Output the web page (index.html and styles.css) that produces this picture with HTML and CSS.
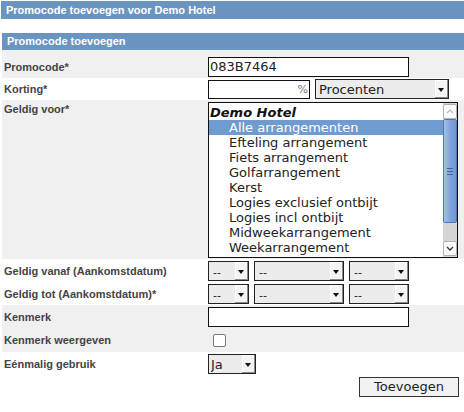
FILE: index.html
```html
<!DOCTYPE html>
<html lang="nl">
<head>
<meta charset="utf-8">
<title>Promocode toevoegen</title>
<link rel="stylesheet" href="styles.css">
</head>
<body>
<div class="page-title">Promocode toevoegen voor Demo Hotel</div>
<form class="form">
  <div class="form-head">Promocode toevoegen</div>

  <div class="row row-first shade">
    <label class="label">Promocode*</label>
    <div class="value"><input class="text text-long" type="text" value="083B7464"></div>
  </div>

  <div class="row row-korting">
    <label class="label">Korting*</label>
    <div class="value">
      <span class="pct-box"><input class="pct-input" type="text" value=""><span class="pct">%</span></span>
      <span class="sel sel-type"><select><option>Procenten</option></select></span>
    </div>
  </div>

  <div class="row row-list shade">
    <label class="label label-top">Geldig voor*</label>
    <div class="value">
      <div class="listbox" role="listbox">
        <div class="lb-items">
          <div class="lb-group">Demo Hotel</div>
          <div class="lb-opt selected">Alle arrangementen</div>
          <div class="lb-opt">Efteling arrangement</div>
          <div class="lb-opt">Fiets arrangement</div>
          <div class="lb-opt">Golfarrangement</div>
          <div class="lb-opt">Kerst</div>
          <div class="lb-opt">Logies exclusief ontbijt</div>
          <div class="lb-opt">Logies incl ontbijt</div>
          <div class="lb-opt">Midweekarrangement</div>
          <div class="lb-opt">Weekarrangement</div>
        </div>
        <div class="scrollbar">
          <div class="sb-btn sb-up"><svg width="8" height="5" viewBox="0 0 8 5"><path d="M1 4 L4 1 L7 4" fill="none" stroke="#b8b8b8" stroke-width="1.2"/></svg></div>
          <div class="sb-thumb"><span class="grip"></span></div>
          <div class="sb-track"></div>
          <div class="sb-btn sb-down"><svg width="8" height="5" viewBox="0 0 8 5"><path d="M1 1 L4 4 L7 1" fill="none" stroke="#333" stroke-width="1.3"/></svg></div>
        </div>
      </div>
    </div>
  </div>

  <div class="row">
    <label class="label">Geldig vanaf (Aankomstdatum)</label>
    <div class="value dates">
      <span class="sel sel-day"><select><option>--</option></select></span>
      <span class="sel sel-month"><select><option>--</option></select></span>
      <span class="sel sel-year"><select><option>--</option></select></span>
    </div>
  </div>

  <div class="row">
    <label class="label">Geldig tot (Aankomstdatum)*</label>
    <div class="value dates">
      <span class="sel sel-day"><select><option>--</option></select></span>
      <span class="sel sel-month"><select><option>--</option></select></span>
      <span class="sel sel-year"><select><option>--</option></select></span>
    </div>
  </div>

  <div class="row shade">
    <label class="label">Kenmerk</label>
    <div class="value"><input class="text text-long" type="text" value=""></div>
  </div>

  <div class="row row-check shade">
    <label class="label">Kenmerk weergeven</label>
    <div class="value"><input class="check" type="checkbox"></div>
  </div>

  <div class="row">
    <label class="label">Eénmalig gebruik</label>
    <div class="value"><span class="sel sel-ja"><select><option>Ja</option></select></span></div>
  </div>

  <div class="row row-submit">
    <button type="button" class="button">Toevoegen</button>
  </div>
</form>
</body>
</html>
```

FILE: styles.css
```css
* { box-sizing: border-box; }

body {
  margin: 0;
  background: #fff;
  font-family: "Liberation Sans", Arial, sans-serif;
}

.page-title {
  margin: 1px 0 0 1px;
  height: 18px;
  line-height: 18px;
  padding-left: 5px;
  background: #6b95c1;
  color: #fff;
  font-size: 11px;
  font-weight: bold;
}

.form {
  margin: 14px 0 0 2px;
}

.form-head {
  height: 17px;
  line-height: 17px;
  padding-left: 5px;
  background: #6b95c1;
  color: #fff;
  font-size: 11px;
  font-weight: bold;
}

.row {
  display: flex;
  align-items: center;
  height: 23px;
}

.shade { background: #f0f0f0; }

.row-first { height: 28px; padding-top: 5px; }
.row-korting { height: 22px; }
.row-list { height: 159px; align-items: flex-start; padding-top: 2px; }
.row-check { height: 24px; }

.label {
  flex: 0 0 206px;
  padding-left: 2px;
  font-size: 11px;
  font-weight: bold;
  color: #444;
}

.label-top { padding-top: 1px; }

.value {
  display: flex;
  align-items: center;
  gap: 5px;
}

.text, .pct-input, select, .button {
  font-family: "DejaVu Sans", sans-serif;
  font-size: 13px;
  color: #222;
}

.text {
  height: 20px;
  border: 1px solid #111;
  padding: 0 1px;
  margin: 0;
  background: #fff;
}

.text-long { width: 201px; }

.pct-box {
  display: flex;
  align-items: center;
  width: 102px;
  height: 19px;
  border: 1px solid #111;
  background: #fff;
}

.pct-input {
  flex: 1;
  min-width: 0;
  height: 17px;
  border: 0;
  padding: 0 1px;
  outline: none;
}

.pct {
  font-family: "DejaVu Sans", sans-serif;
  font-size: 11px;
  color: #777;
  padding-right: 1px;
}

.sel {
  position: relative;
  display: inline-block;
  height: 20px;
  border: 1px solid #222;
  background: #ececec;
}

.sel select {
  appearance: none;
  -webkit-appearance: none;
  border: 0;
  background: transparent;
  width: 100%;
  height: 18px;
  padding: 0 14px 0 3px;
  margin: 0;
  outline: none;
}

.sel::after {
  content: "";
  position: absolute;
  top: 0;
  right: 0;
  width: 13px;
  height: 18px;
  background: #f4f4f4;
  box-shadow: inset -1px -1px 0 #8a8a8a, inset 1px 1px 0 #fff;
  pointer-events: none;
}

.sel::before {
  content: "";
  position: absolute;
  z-index: 1;
  top: 8px;
  right: 4px;
  border-left: 3px solid transparent;
  border-right: 3px solid transparent;
  border-top: 4px solid #111;
  pointer-events: none;
}

.sel-type { width: 134px; margin-left: 0; }
.sel-type select { font-size: 13px; padding-left: 3px; }
.row-korting .value { gap: 5px; }

.dates { gap: 5px; }
.sel-day { width: 41px; }
.sel-month { width: 90px; }
.sel-year { width: 60px; }
.sel-day select, .sel-month select, .sel-year select { font-size: 11px; padding-left: 4px; }
.sel-ja { width: 48px; }
.sel-ja select { font-size: 13px; padding-left: 2px; }

.listbox {
  display: flex;
  width: 250px;
  height: 156px;
  border: 1px solid #111;
  background: #fff;
}

.lb-items {
  flex: 1;
  padding-top: 2px;
  font-family: "DejaVu Sans", sans-serif;
  font-size: 13px;
  color: #222;
}

.lb-group {
  height: 15px;
  line-height: 15px;
  padding-left: 1px;
  font-weight: bold;
  font-style: italic;
  color: #111;
}

.lb-opt {
  height: 15px;
  line-height: 15px;
  padding-left: 20px;
  white-space: nowrap;
}

.lb-opt.selected {
  background: #6f9bd0;
  color: #fff;
}

.scrollbar {
  flex: 0 0 14px;
  display: flex;
  flex-direction: column;
  padding: 1px 0 1px 0;
  background: #d6d6d6;
}

.sb-btn {
  flex: 0 0 15px;
  display: flex;
  align-items: center;
  justify-content: center;
  background: #fafafa;
  border: 1px solid #b0b0b0;
  border-radius: 2px;
}

.sb-thumb {
  flex: 0 0 104px;
  display: flex;
  align-items: center;
  justify-content: center;
  background: linear-gradient(to right, #a6c2e8, #7ea5da 50%, #6f98d2);
  border: 1px solid #4f78b3;
  border-radius: 2px;
}

.grip {
  width: 6px;
  height: 7px;
  border-top: 1px solid #3e6298;
  border-bottom: 1px solid #3e6298;
  position: relative;
}

.grip::after {
  content: "";
  position: absolute;
  left: 0;
  right: 0;
  top: 2px;
  border-top: 1px solid #3e6298;
}

.sb-track { flex: 1; background: #d6d6d6; }

.check {
  appearance: none;
  -webkit-appearance: none;
  width: 13px;
  height: 13px;
  margin: 0 0 0 5px;
  border: 1px solid #777;
  border-radius: 2px;
  background: #fff;
}

.row-submit {
  justify-content: flex-end;
  padding-right: 5px;
}

.button {
  width: 100px;
  height: 20px;
  border: 1px solid #333;
  background: #f2f2f2;
  padding: 0;
  border-radius: 0;
  color: #222;
}
```
